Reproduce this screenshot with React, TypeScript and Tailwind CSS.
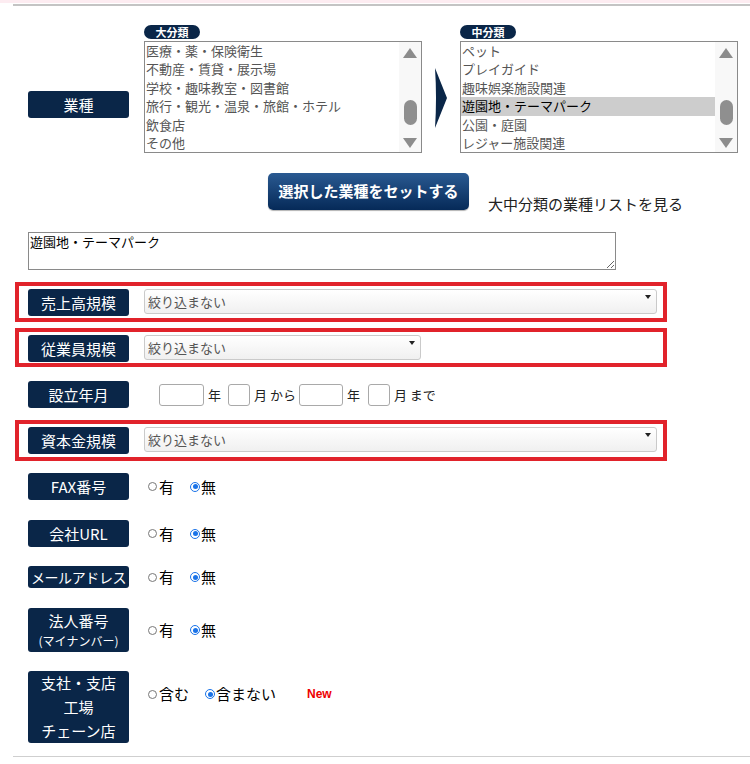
import React from 'react'

const font = "font-['Noto_Sans_CJK_JP','Noto_Sans',sans-serif]"

const bigItems = ['医療・薬・保険衛生', '不動産・賃貸・展示場', '学校・趣味教室・図書館', '旅行・観光・温泉・旅館・ホテル', '飲食店', 'その他']
const midItems = ['ペット', 'プレイガイド', '趣味娯楽施設関連', '遊園地・テーマパーク', '公園・庭園', 'レジャー施設関連']

function Label({ children, h = 'h-[27px]', className = '' }: { children: React.ReactNode; h?: string; className?: string }) {
  return (
    <div className={`w-[101px] shrink-0 ${h} bg-[#0a2648] rounded-[3px] text-white text-[15px] flex flex-col items-center justify-center leading-[22px] ${className}`}>
      {children}
    </div>
  )
}

function Pill({ children }: { children: React.ReactNode }) {
  return (
    <div className="w-[56px] h-[14px] rounded-full bg-[#0a2648] text-white text-[11px] font-bold leading-[14px] text-center">
      {children}
    </div>
  )
}

function ListBox({ items, selected }: { items: string[]; selected?: string }) {
  return (
    <div className="mt-[2px] w-[278px] h-[112px] border border-[#8a8a8a] bg-white flex">
      <div className="flex-1 overflow-hidden">
        {items.map((it) => (
          <div
            key={it}
            className={`h-[18.4px] leading-[18.4px] text-[13px] pl-[1px] whitespace-nowrap ${
              it === selected ? 'bg-[#cdcdcd] text-black' : 'text-[#555]'
            }`}
          >
            {it}
          </div>
        ))}
      </div>
      {/* fake scrollbar */}
      <div className="w-[22px] bg-[#f8f8f8] flex flex-col items-center pt-[6px]">
        <svg width="14" height="10" viewBox="0 0 14 10">
          <path d="M7 0 L14 10 L0 10 Z" fill="#8c8c8c" />
        </svg>
        <div className="mt-[42px] w-[13px] h-[25px] rounded-full bg-[#8f8f8f]" />
        <svg className="mt-[13px]" width="14" height="10" viewBox="0 0 14 10">
          <path d="M0 0 L14 0 L7 10 Z" fill="#8c8c8c" />
        </svg>
      </div>
    </div>
  )
}

function Select({ w }: { w: string }) {
  return (
    <div className={`relative ${w} h-[25px] border border-[#cacaca] rounded-[3px] bg-gradient-to-b from-white to-[#f0f0f0] text-[13px] text-[#555] pl-[3px] leading-[23px]`}>
      絞り込まない
      <span className="absolute right-[5px] top-[5px] w-0 h-0 border-x-[3px] border-x-transparent border-t-[4px] border-t-[#222]" />
    </div>
  )
}

function RedBox({ label, selectW, h, mt }: { label: string; selectW: string; h: string; mt: string }) {
  return (
    <div className={`${mt} ml-[15px] w-[652px] ${h} border-[4px] border-[#e1232b] flex items-start pt-[3px] pl-[9px]`}>
      <Label>{label}</Label>
      <div className="ml-[15px]">
        <Select w={selectW} />
      </div>
    </div>
  )
}

function Radio({ checked }: { checked?: boolean }) {
  return checked ? (
    <span className="w-[10px] h-[10px] rounded-full border-[1.5px] border-[#1a73e8] bg-white flex items-center justify-center">
      <span className="w-[5px] h-[5px] rounded-full bg-[#1a73e8]" />
    </span>
  ) : (
    <span className="w-[9px] h-[9px] rounded-full border border-[#777] bg-white" />
  )
}

function YesNo() {
  return (
    <div className="ml-[19px] flex items-center text-[15px] leading-[20px]">
      <Radio />
      <span className="ml-[2px]">有</span>
      <span className="ml-[16px]">
        <Radio checked />
      </span>
      <span className="ml-[1px]">無</span>
    </div>
  )
}

function Box({ w }: { w: string }) {
  return <div className={`${w} h-[22px] border border-[#a9a9a9] rounded-[3px] bg-white`} />
}

export default function App() {
  return (
    <div className={`w-[750px] h-[764px] bg-white text-black overflow-hidden ${font}`}>
      <div className="h-[3px] bg-[#fdecf1]" />
      <div className="mt-[1px] ml-[13px] h-[2px] bg-[#c4c4c4]" />

      {/* 業種 */}
      <div className="mt-[19px] flex items-start">
        <Label className="ml-[28px] mt-[66px]">業種</Label>
        <div className="ml-[15px]">
          <Pill>大分類</Pill>
          <ListBox items={bigItems} />
        </div>
        <svg className="ml-[13px] mt-[43px]" width="12" height="60" viewBox="0 0 12 60">
          <path d="M0 0 L12 30 L0 60 Q2 30 0 0 Z" fill="#0a2648" />
        </svg>
        <div className="ml-[13px]">
          <Pill>中分類</Pill>
          <ListBox items={midItems} selected="遊園地・テーマパーク" />
        </div>
      </div>

      {/* set button */}
      <div className="mt-[20px] h-[37px] flex items-start pl-[268px]">
        <div className="w-[201px] h-[37px] rounded-[5px] bg-gradient-to-b from-[#2a5a92] to-[#062a58] text-white text-[15px] font-bold flex items-center justify-center shadow-[0_1px_1px_rgba(0,0,0,0.3)]">
          選択した業種をセットする
        </div>
        <div className="ml-[19px] mt-[21px] text-[15px] leading-[20px] text-[#222] whitespace-nowrap">大中分類の業種リストを見る</div>
      </div>

      <textarea
        readOnly
        defaultValue="遊園地・テーマパーク"
        className={`block mt-[22px] ml-[28px] w-[588px] h-[38px] border border-[#8a8a8a] text-[13px] leading-[16px] px-[1px] py-[1px] outline-none ${font}`}
      />

      <RedBox label="売上高規模" selectW="w-[513px]" h="h-[40px]" mt="mt-[12px]" />
      <RedBox label="従業員規模" selectW="w-[277px]" h="h-[39px]" mt="mt-[6px]" />

      {/* 設立年月 */}
      <div className="mt-[14px] ml-[28px] flex items-center text-[13px] text-[#222]">
        <Label>設立年月</Label>
        <div className="ml-[30px]"><Box w="w-[45px]" /></div>
        <span className="ml-[4px]">年</span>
        <div className="ml-[7px]"><Box w="w-[22px]" /></div>
        <span className="ml-[4px] whitespace-nowrap">月 から</span>
        <div className="ml-[3px]"><Box w="w-[44px]" /></div>
        <span className="ml-[4px]">年</span>
        <div className="ml-[8px]"><Box w="w-[22px]" /></div>
        <span className="ml-[4px] whitespace-nowrap">月 まで</span>
      </div>

      <RedBox label="資本金規模" selectW="w-[513px]" h="h-[41px]" mt="mt-[12px]" />

      <div className="mt-[12px] ml-[28px] flex items-center">
        <Label>FAX番号</Label>
        <YesNo />
      </div>
      <div className="mt-[20px] ml-[28px] flex items-center">
        <Label>会社URL</Label>
        <YesNo />
      </div>
      <div className="mt-[19px] ml-[28px] flex items-center">
        <Label h="h-[22px]" className="!text-[14px] tracking-[-0.4px] whitespace-nowrap">メールアドレス</Label>
        <YesNo />
      </div>
      <div className="mt-[20px] ml-[28px] flex items-center">
        <Label h="h-[44px]">
          <span className="leading-[22px]">法人番号</span>
          <span className="text-[12px] leading-[18px]">(マイナンバー)</span>
        </Label>
        <YesNo />
      </div>
      <div className="mt-[19px] ml-[28px] flex items-start">
        <Label h="h-[72px]" className="!leading-[24px]">
          <span>支社・支店</span>
          <span>工場</span>
          <span>チェーン店</span>
        </Label>
        <div className="ml-[19px] mt-[13px] flex items-center text-[15px] leading-[20px]">
          <Radio />
          <span className="ml-[2px]">含む</span>
          <span className="ml-[16px]">
            <Radio checked />
          </span>
          <span className="ml-[1px]">含まない</span>
          <span className="ml-[31px] text-[12px] font-bold text-[#e00] font-['Liberation_Sans',sans-serif]">New</span>
        </div>
      </div>

      <div className="mt-[13px] ml-[13px] h-[1px] bg-[#cfcfcf]" />
    </div>
  )
}
